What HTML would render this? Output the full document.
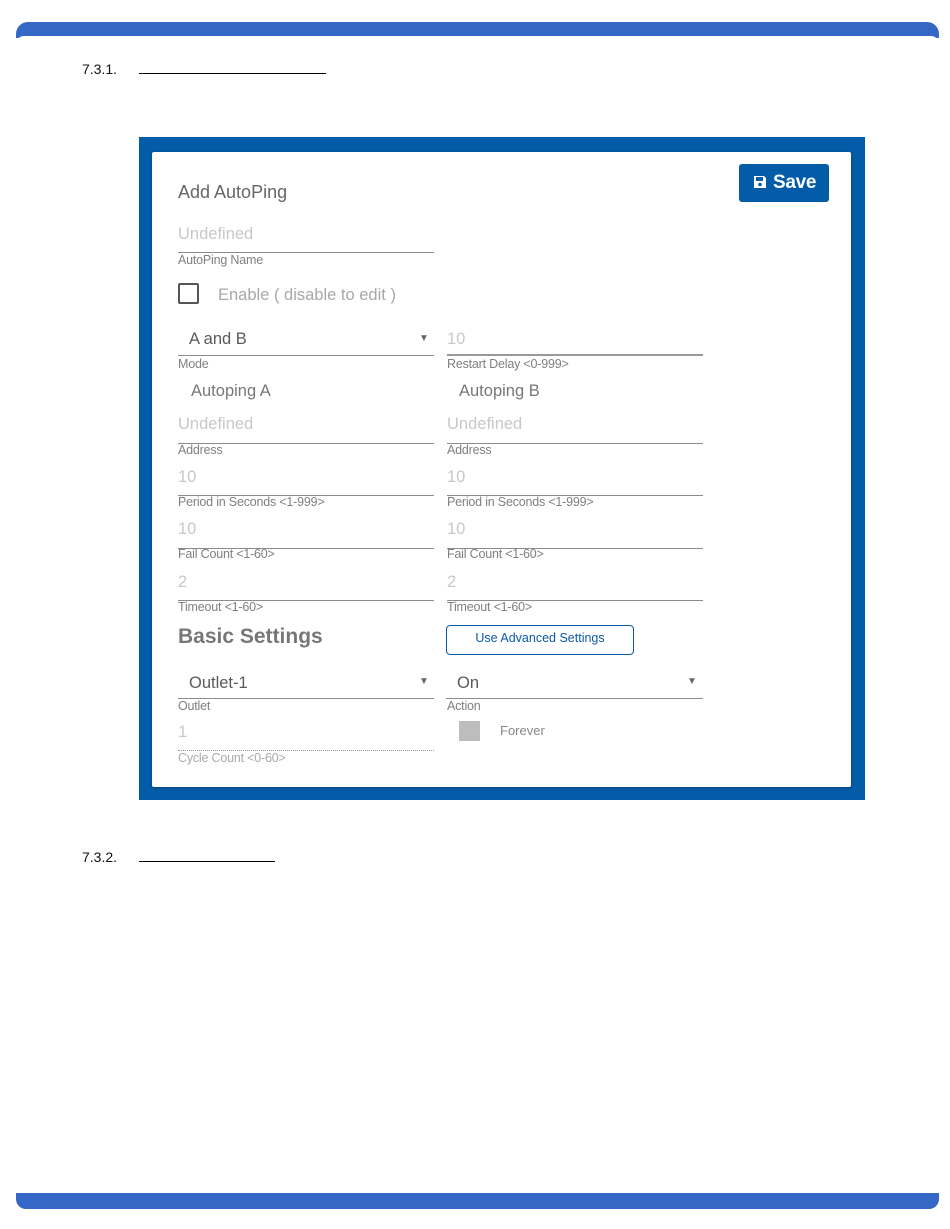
<!DOCTYPE html>
<html><head><meta charset="utf-8"><style>
*{margin:0;padding:0;box-sizing:border-box}
body{width:950px;height:1229px;background:#fff;position:relative;overflow:hidden;font-family:"Liberation Sans",Arial,sans-serif}
.a{position:absolute;white-space:nowrap;line-height:1}
.bar{position:absolute;left:16px;width:923px;background:#3568c6}
.ln{position:absolute;height:1px;background:#8c8c8c}
.lab{font-size:12.5px;color:#808080;letter-spacing:-0.2px}
.val{font-size:16.5px;color:#c8c8c8}
.sel{font-size:16.5px;color:#5a5a5a}
.arr{font-size:10px;color:#666}
</style></head><body>
<div class="bar" style="top:22px;height:16px;border-radius:12px 12px 0 0"></div>
<div style="position:absolute;left:16px;top:36px;width:923px;height:8px;background:#fff;border-radius:10px 10px 0 0"></div>
<div class="bar" style="top:1193px;height:16px;border-radius:0 0 10px 10px"></div>
<div style="position:absolute;left:16px;top:1185px;width:923px;height:8px;background:#fff;border-radius:0 0 10px 10px"></div>

<div class="a" style="left:82px;top:62px;font-size:14px;color:#111">7.3.1.</div>
<div style="position:absolute;left:139px;top:73px;width:187px;height:1px;background:#000"></div>
<div class="a" style="left:82px;top:850px;font-size:14px;color:#111">7.3.2.</div>
<div style="position:absolute;left:139px;top:861px;width:136px;height:1px;background:#000"></div>

<div style="position:absolute;left:139px;top:137px;width:726px;height:663px;background:#035ca8"></div>
<div style="position:absolute;left:152px;top:152px;width:699px;height:635px;background:#fff;border-radius:2px;box-shadow:0 1px 3px rgba(0,0,0,.3)"></div>

<div style="position:absolute;left:739px;top:164px;width:90px;height:38px;background:#035ca8;border-radius:3px"></div>
<svg style="position:absolute;left:753px;top:175px" width="14" height="14" viewBox="0 0 14 14"><path d="M1 1h10l2 2v10H1z" fill="#fff"/><rect x="3" y="2" width="7" height="4" fill="#035ca8"/><circle cx="7" cy="9.5" r="1.8" fill="#035ca8"/></svg>
<div class="a" style="left:773px;top:173px;font-size:19px;color:#fff;font-weight:bold;letter-spacing:-0.3px">Save</div>

<div class="a" style="left:178px;top:183px;font-size:18px;color:#666">Add AutoPing</div>
<div class="a val" style="left:178px;top:226px">Undefined</div>
<div class="ln" style="left:178px;top:252px;width:256px"></div>
<div class="a lab" style="left:178px;top:254px">AutoPing Name</div>

<div style="position:absolute;left:178px;top:283px;width:21px;height:21px;border:2px solid #555;border-radius:2px"></div>
<div class="a" style="left:218px;top:287px;font-size:16.5px;color:#a8a8a8">Enable ( disable to edit )</div>

<div class="a sel" style="left:189px;top:331px">A and B</div>
<div class="a arr" style="left:419px;top:334px">▼</div>
<div class="ln" style="left:178px;top:355px;width:256px"></div>
<div class="a val" style="left:447px;top:331px">10</div>
<div class="ln" style="left:447px;top:354px;width:256px;height:2px;background:#999"></div>
<div class="a lab" style="left:178px;top:358px">Mode</div>
<div class="a lab" style="left:447px;top:358px">Restart Delay &lt;0-999&gt;</div>

<div class="a" style="left:191px;top:383px;font-size:16.5px;color:#777">Autoping A</div>
<div class="a" style="left:459px;top:383px;font-size:16.5px;color:#777">Autoping B</div>

<div class="a val" style="left:178px;top:416px">Undefined</div>
<div class="a val" style="left:447px;top:416px">Undefined</div>
<div class="ln" style="left:178px;top:443px;width:256px"></div>
<div class="ln" style="left:447px;top:443px;width:256px"></div>
<div class="a lab" style="left:178px;top:444px">Address</div>
<div class="a lab" style="left:447px;top:444px">Address</div>

<div class="a val" style="left:178px;top:469px">10</div>
<div class="a val" style="left:447px;top:469px">10</div>
<div class="ln" style="left:178px;top:495px;width:256px"></div>
<div class="ln" style="left:447px;top:495px;width:256px"></div>
<div class="a lab" style="left:178px;top:496px">Period in Seconds &lt;1-999&gt;</div>
<div class="a lab" style="left:447px;top:496px">Period in Seconds &lt;1-999&gt;</div>

<div class="a val" style="left:178px;top:521px">10</div>
<div class="a val" style="left:447px;top:521px">10</div>
<div class="ln" style="left:178px;top:548px;width:256px"></div>
<div class="ln" style="left:447px;top:548px;width:256px"></div>
<div class="a lab" style="left:178px;top:548px">Fail Count &lt;1-60&gt;</div>
<div class="a lab" style="left:447px;top:548px">Fail Count &lt;1-60&gt;</div>

<div class="a val" style="left:178px;top:574px">2</div>
<div class="a val" style="left:447px;top:574px">2</div>
<div class="ln" style="left:178px;top:600px;width:256px"></div>
<div class="ln" style="left:447px;top:600px;width:256px"></div>
<div class="a lab" style="left:178px;top:601px">Timeout &lt;1-60&gt;</div>
<div class="a lab" style="left:447px;top:601px">Timeout &lt;1-60&gt;</div>

<div class="a" style="left:178px;top:626px;font-size:21px;font-weight:bold;color:#777">Basic Settings</div>
<div style="position:absolute;left:446px;top:625px;width:188px;height:30px;border:1px solid #0a5aa8;border-radius:4px"></div>
<div class="a" style="left:446px;top:632px;width:188px;text-align:center;font-size:12.5px;color:#0a5aa8">Use Advanced Settings</div>

<div class="a sel" style="left:189px;top:675px">Outlet-1</div>
<div class="a arr" style="left:419px;top:677px">▼</div>
<div class="ln" style="left:178px;top:698px;width:256px"></div>
<div class="a sel" style="left:457px;top:675px">On</div>
<div class="a arr" style="left:687px;top:677px">▼</div>
<div class="ln" style="left:446px;top:698px;width:257px"></div>
<div class="a lab" style="left:178px;top:700px">Outlet</div>
<div class="a lab" style="left:447px;top:700px">Action</div>

<div class="a val" style="left:178px;top:724px">1</div>
<div style="position:absolute;left:178px;top:750px;width:256px;border-top:1px dotted #999"></div>
<div class="a lab" style="left:178px;top:752px;color:#aaa">Cycle Count &lt;0-60&gt;</div>
<div style="position:absolute;left:459px;top:721px;width:21px;height:20px;background:#bdbdbd"></div>
<div class="a" style="left:500px;top:724px;font-size:13px;color:#888">Forever</div>
</body></html>
